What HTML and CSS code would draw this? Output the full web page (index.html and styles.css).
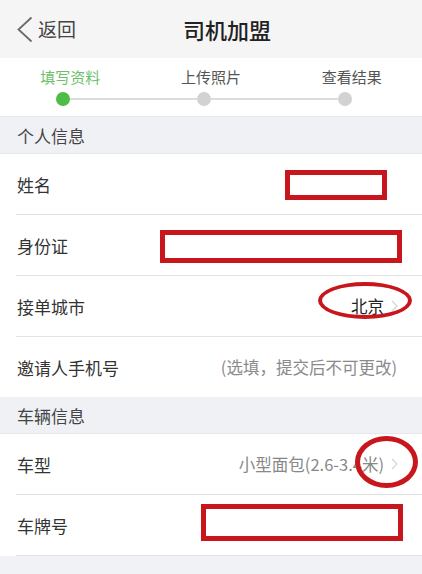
FILE: index.html
```html
<!DOCTYPE html>
<html lang="zh-CN">
<head>
<meta charset="utf-8">
<title>司机加盟</title>
<link rel="stylesheet" href="styles.css">
</head>
<body>
<div class="page">
  <header class="topbar">
    <div class="back">
      <svg class="back-icon" width="16" height="28" viewBox="0 0 16 28"><polyline points="14.5,1.5 1.5,13.5 14.5,25.5" fill="none" stroke="#6a6a6a" stroke-width="1.8" stroke-linejoin="miter"/></svg>
      <span class="back-text">返回</span>
    </div>
    <h1 class="title">司机加盟</h1>
    <div></div>
  </header>

  <section class="steps">
    <div class="step-labels">
      <span class="step-label active">填写资料</span>
      <span class="step-label">上传照片</span>
      <span class="step-label">查看结果</span>
    </div>
    <div class="track">
      <span class="dot active"></span>
      <span class="line"></span>
      <span class="dot"></span>
      <span class="line"></span>
      <span class="dot"></span>
    </div>
  </section>

  <div class="group-title">个人信息</div>
  <div class="list">
    <div class="row">
      <span class="label">姓名</span>
      <span class="mark box mark-name"></span>
    </div>
    <div class="row">
      <span class="label">身份证</span>
      <span class="mark box mark-id"></span>
    </div>
    <div class="row">
      <span class="label">接单城市</span>
      <span class="value dark">北京<svg class="chev" width="7" height="12" viewBox="0 0 7 12"><polyline points="1,1 6,6 1,11" fill="none" stroke="#d4d4d4" stroke-width="1.2"/></svg></span>
      <span class="mark ring mark-city"></span>
    </div>
    <div class="row last">
      <span class="label">邀请人手机号</span>
      <span class="value placeholder">(选填，提交后不可更改)</span>
    </div>
  </div>

  <div class="group-title">车辆信息</div>
  <div class="list">
    <div class="row">
      <span class="label">车型</span>
      <span class="value">小型面包(2.6-3.4米)<svg class="chev" width="7" height="12" viewBox="0 0 7 12"><polyline points="1,1 6,6 1,11" fill="none" stroke="#d4d4d4" stroke-width="1.2"/></svg></span>
      <span class="mark ring mark-type"></span>
    </div>
    <div class="row">
      <span class="label">车牌号</span>
      <span class="mark box mark-plate"></span>
    </div>
  </div>
</div>
</body>
</html>
```

FILE: styles.css
```css
* { box-sizing: border-box; }
html, body { margin: 0; padding: 0; }
body {
  background: #f0f2f5;
  font-family: "Noto Sans CJK SC", "Noto Sans", sans-serif;
  color: #333;
  width: 422px;
  height: 574px;
  overflow: hidden;
}
.page { width: 422px; }

.topbar {
  height: 58px;
  background: #f5f5f5;
  display: grid;
  grid-template-columns: 1fr auto 1fr;
  align-items: center;
}
.back {
  display: flex;
  align-items: center;
  padding-left: 17px;
  gap: 5px;
}
.back-icon { display: block; margin-top: 1px; }
.back-text {
  font-size: 19px;
  color: #444;
  line-height: 28px;
}
.title {
  margin: 0;
  font-size: 22px;
  font-weight: 500;
  color: #222;
  padding-left: 32px;
  line-height: 30px;
}

.steps {
  height: 59px;
  background: #fff;
  border-bottom: 1px solid #e6e8eb;
}
.step-labels {
  display: grid;
  grid-template-columns: repeat(3, 1fr);
  padding-top: 9px;
}
.step-label {
  text-align: center;
  font-size: 15px;
  line-height: 20px;
  color: #555;
}
.step-label.active { color: #6dbf6a; }
.track {
  display: flex;
  align-items: center;
  padding-left: 56px;
  padding-right: 70px;
  margin-top: 5px;
}
.dot {
  width: 14px;
  height: 14px;
  border-radius: 50%;
  background: #d2d2d2;
  flex: none;
}
.dot.active { background: #4dbd47; }
.line {
  flex: 1;
  height: 2px;
  background: #dcdcdc;
}

.group-title {
  height: 37px;
  background: #eff1f4;
  font-size: 17px;
  color: #444;
  padding-left: 17px;
  line-height: 38px;
  border-bottom: 1px solid #e4e6e9;
}

.list { background: #fff; }
.row {
  position: relative;
  height: 61px;
  margin-left: 16px;
  padding-left: 1px;
  padding-right: 24px;
  border-bottom: 1px solid #e3e3e3;
  display: flex;
  align-items: center;
  justify-content: space-between;
}
.row.last { border-bottom: none; height: 60px; }
.label {
  font-size: 17px;
  color: #333;
}
.value {
  display: flex;
  align-items: center;
  gap: 7px;
  font-size: 16.5px;
  color: #888;
}
.value.dark { color: #222; }
.value.placeholder { color: #8a8a8a; padding-right: 1px; }
.chev { display: block; }

.mark {
  position: absolute;
  border: 5px solid #c8161d;
}
.box { background: transparent; }
.ring { border-radius: 50%; }
.mark-name { left: 269px; top: 16px; width: 102px; height: 30px; }
.mark-id { left: 144px; top: 15px; width: 242px; height: 33px; }
.mark-city { left: 302px; top: 6px; width: 94px; height: 37px; border-width: 4px; }
.mark-type { left: 339px; top: 2px; width: 63px; height: 52px; }
.mark-plate { left: 185px; top: 9px; width: 202px; height: 37px; }
```
